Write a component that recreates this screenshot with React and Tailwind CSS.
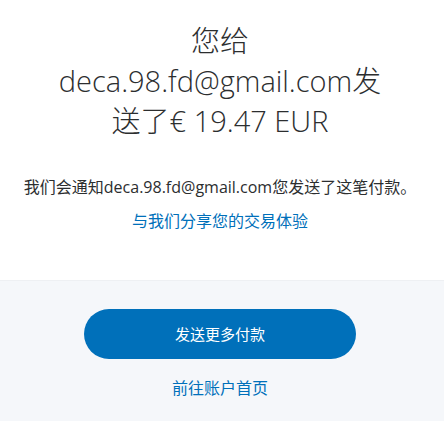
import React from "react";

const FONT = { fontFamily: '"Open Sans", "Noto Sans CJK SC", sans-serif' };

export default function App() {
  return (
    <div className="min-h-[421px] w-full flex flex-col bg-white text-[#2c2e2f]" style={FONT}>
      <div className="flex flex-col items-center pl-5 pr-6 pt-[21px] pb-[47px]">
        <h1 className="w-[350px] text-center text-[29px] leading-[40px] font-light">
          您给 deca.98.fd@gmail.com发送了€ 19.47 EUR
        </h1>
        <p className="mt-[34px] whitespace-nowrap text-center text-[16px] leading-[24px]">
          我们会通知deca.98.fd@gmail.com您发送了这笔付款。
        </p>
        <a href="#" className="mt-[10px] text-[16px] leading-[24px] text-[#0070ba]">
          与我们分享您的交易体验
        </a>
      </div>
      <div className="flex-1 flex flex-col items-center bg-[#f5f7fa] border-t border-[#eef0f3] pr-1 pt-[28px] pb-6">
        <button className="w-[272px] h-[50px] rounded-full bg-[#0070ba] text-white text-[15px]">
          发送更多付款
        </button>
        <a href="#" className="mt-[17px] text-[16px] leading-[24px] text-[#0070ba]">
          前往账户首页
        </a>
      </div>
    </div>
  );
}
